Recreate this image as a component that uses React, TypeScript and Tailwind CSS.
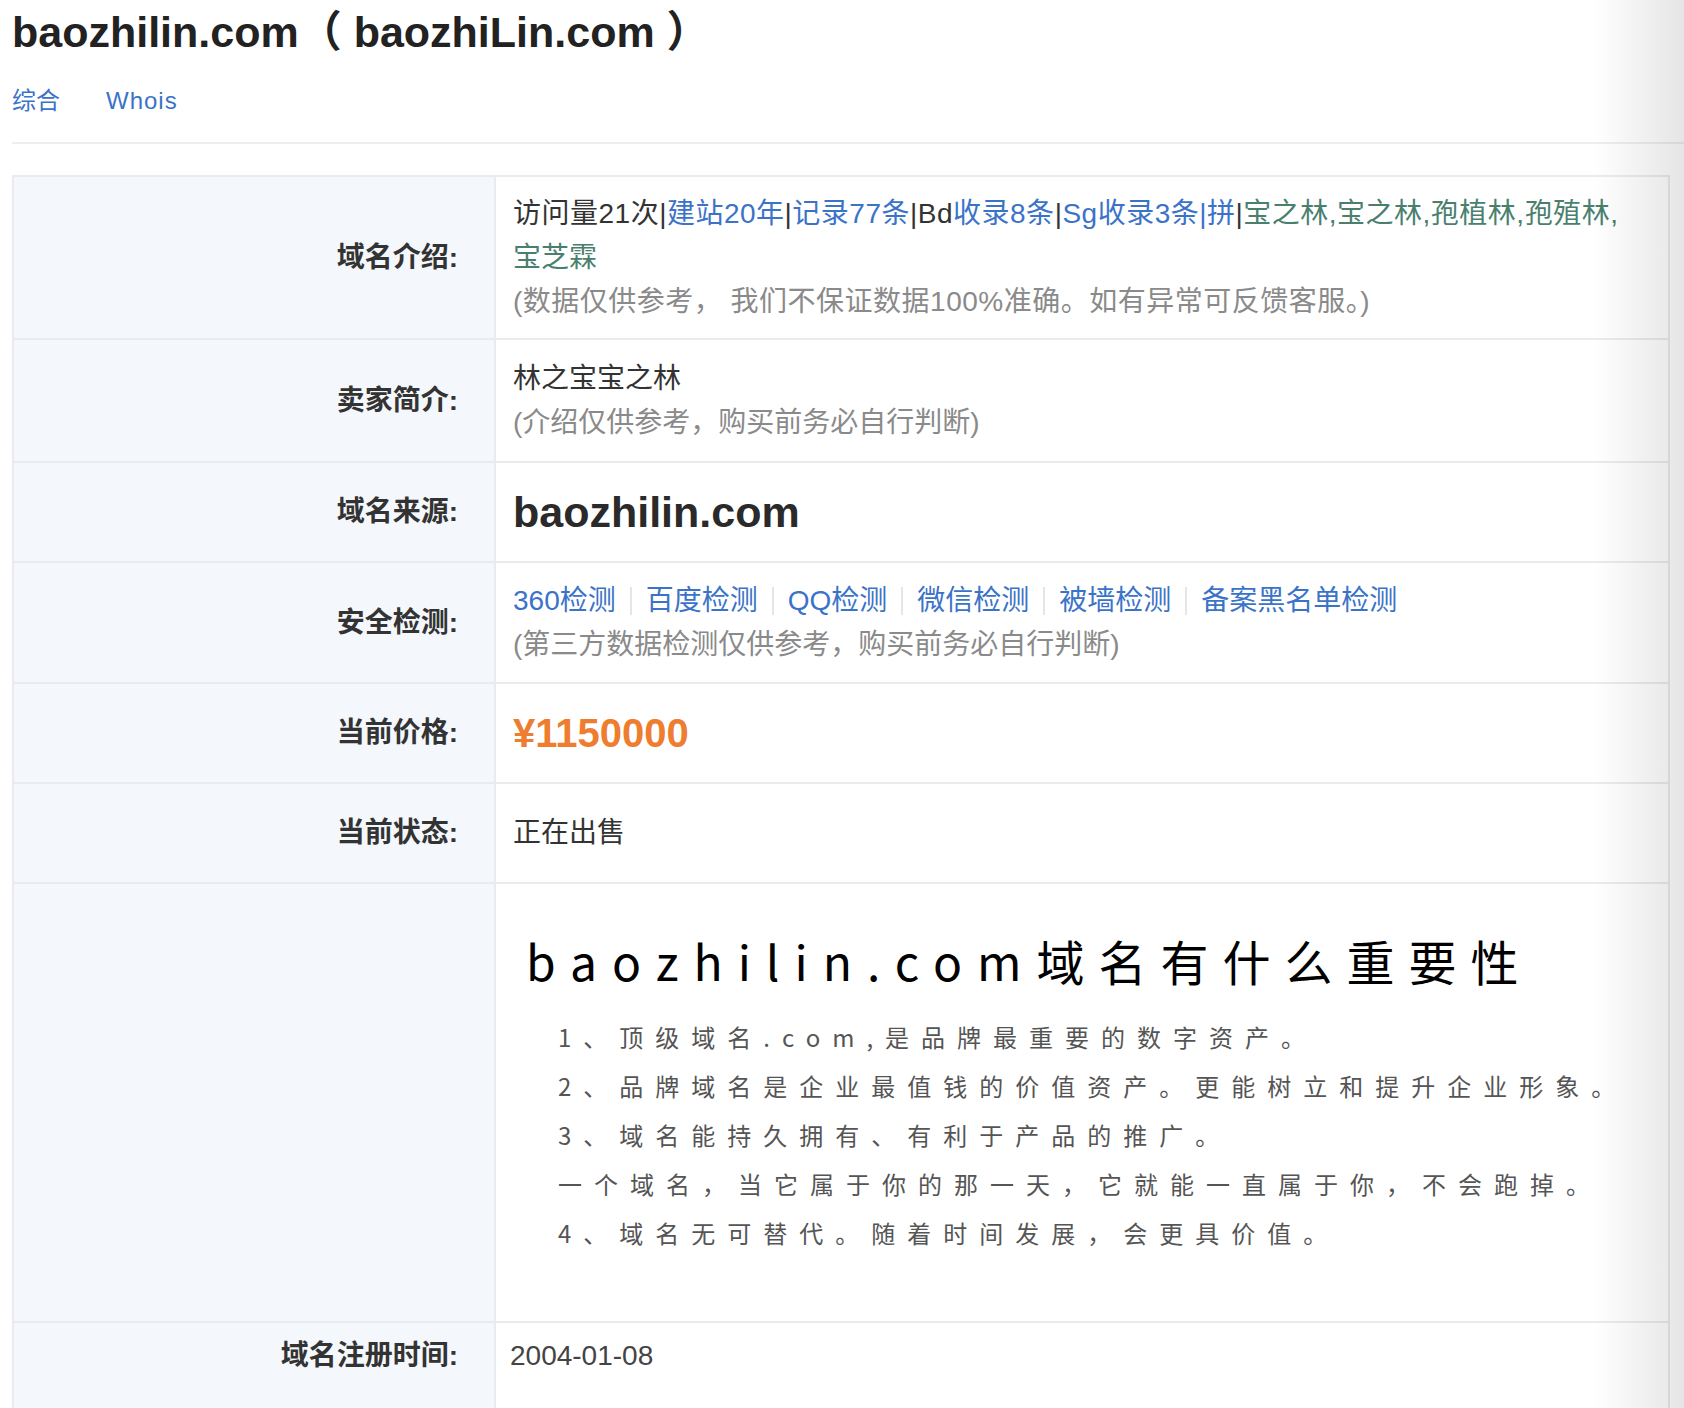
import React from "react";

const BLUE = "text-[#3b73c8]";

function Label({ children }: { children: React.ReactNode }) {
  return (
    <div className="flex items-center justify-end bg-[#f4f7fc] border-r-2 border-[#eaebee] pr-[36px] text-[28px] font-bold text-[#333]">
      {children}
    </div>
  );
}

function Sep() {
  return <span className="inline-block w-[2px] h-[28px] bg-[#e3e5e8] mx-[14px] align-[-5px]" />;
}

export default function App() {
  const checks = ["360检测", "百度检测", "QQ检测", "微信检测", "被墙检测", "备案黑名单检测"];
  const points = [
    "1、顶级域名.com,是品牌最重要的数字资产。",
    "2、品牌域名是企业最值钱的价值资产。更能树立和提升企业形象。",
    "3、域名能持久拥有、有利于产品的推广。",
    "一个域名，当它属于你的那一天，它就能一直属于你，不会跑掉。",
    "4、域名无可替代。随着时间发展，会更具价值。",
  ];

  return (
    <div className="relative w-[1684px] h-[1408px] overflow-hidden bg-white text-[#333] font-['Liberation_Sans','Noto_Sans_CJK_SC',sans-serif]">
      {/* 标题 + 标签 */}
      <div className="pl-[12px]">
        <h1 className="pt-[7px] text-[43px] leading-[50px] font-bold text-[#222]">
          baozhilin.com（ baozhiLin.com ）
        </h1>
        <nav className="mt-[24px] flex items-center gap-[46px] text-[24px] leading-[40px] text-[#3b73c8]">
          <span>综合</span>
          <span className="tracking-[1px]">Whois</span>
        </nav>
        <div className="mt-[21px] h-[2px] bg-[#eeeeee]" />
      </div>

      {/* 信息表 */}
      <div className="mt-[31px] ml-[12px] w-[1658px] border-2 border-b-0 border-[#eaebee] text-[28px] leading-[44px]">
        <div className="grid grid-cols-[482px_1fr] h-[163px] border-b-2 border-[#eaebee]">
          <Label>域名介绍:</Label>
          <div className="flex flex-col justify-center pl-[17px] pr-[10px]">
            <div className="whitespace-nowrap tracking-[0.5px]">
              访问量21次|<span className={BLUE}>建站20年</span>|<span className={BLUE}>记录77条</span>|Bd
              <span className={BLUE}>收录8条</span>|<span className={BLUE}>Sg收录3条|拼</span>|
              <span className="text-[#4a7f6e]">宝之林,宝之林,孢植林,孢殖林,</span>
            </div>
            <div className="text-[#4a7f6e]">宝芝霖</div>
            <div className="text-[#8a8a8a] tracking-[0.5px]">(数据仅供参考， 我们不保证数据100%准确。如有异常可反馈客服。)</div>
          </div>
        </div>

        <div className="grid grid-cols-[482px_1fr] h-[123px] border-b-2 border-[#eaebee]">
          <Label>卖家简介:</Label>
          <div className="flex flex-col justify-center pl-[17px]">
            <div>林之宝宝之林</div>
            <div className="text-[#8a8a8a]">(介绍仅供参考，购买前务必自行判断)</div>
          </div>
        </div>

        <div className="grid grid-cols-[482px_1fr] h-[100px] border-b-2 border-[#eaebee]">
          <Label>域名来源:</Label>
          <div className="flex items-center pl-[17px] text-[43px] font-bold text-[#2a2a2a]">baozhilin.com</div>
        </div>

        <div className="grid grid-cols-[482px_1fr] h-[121px] border-b-2 border-[#eaebee]">
          <Label>安全检测:</Label>
          <div className="flex flex-col justify-center pl-[17px]">
            <div className="whitespace-nowrap">
              {checks.map((c, i) => (
                <React.Fragment key={c}>
                  {i > 0 && <Sep />}
                  <span className={BLUE}>{c}</span>
                </React.Fragment>
              ))}
            </div>
            <div className="text-[#8a8a8a]">(第三方数据检测仅供参考，购买前务必自行判断)</div>
          </div>
        </div>

        <div className="grid grid-cols-[482px_1fr] h-[100px] border-b-2 border-[#eaebee]">
          <Label>当前价格:</Label>
          <div className="flex items-center pl-[17px] text-[40px] font-bold text-[#ee7d30]">¥1150000</div>
        </div>

        <div className="grid grid-cols-[482px_1fr] h-[100px] border-b-2 border-[#eaebee]">
          <Label>当前状态:</Label>
          <div className="flex items-center pl-[17px]">正在出售</div>
        </div>

        <div className="grid grid-cols-[482px_1fr] h-[439px] border-b-2 border-[#eaebee]">
          <div className="bg-[#f4f7fc] border-r-2 border-[#eaebee]" />
          <div className="pt-[46px] pl-[30px] font-['Noto_Sans_CJK_SC',sans-serif]">
            <div className="text-[48px] leading-[60px] text-black whitespace-nowrap">
              <span className="tracking-[15px]">baozhilin.com</span>
              <span className="tracking-[14px]">域名有什么重要性</span>
            </div>
            <div className="mt-[22px] pl-[32px] text-[24px] leading-[49px] tracking-[12px] text-[#555] whitespace-nowrap">
              {points.map((p) => (
                <div key={p}>{p}</div>
              ))}
            </div>
          </div>
        </div>

        <div className="grid grid-cols-[482px_1fr] h-[120px]">
          <div className="flex justify-end bg-[#f4f7fc] border-r-2 border-[#eaebee] pt-[11px] pr-[36px] text-[28px] font-bold text-[#333]">
            域名注册时间:
          </div>
          <div className="pt-[11px] pl-[14px] text-[#444]">2004-01-08</div>
        </div>
      </div>

      {/* 右侧页面阴影 */}
      <div className="pointer-events-none absolute top-0 right-0 h-full w-[90px] bg-gradient-to-r from-transparent to-[#0000001a]" />
    </div>
  );
}
